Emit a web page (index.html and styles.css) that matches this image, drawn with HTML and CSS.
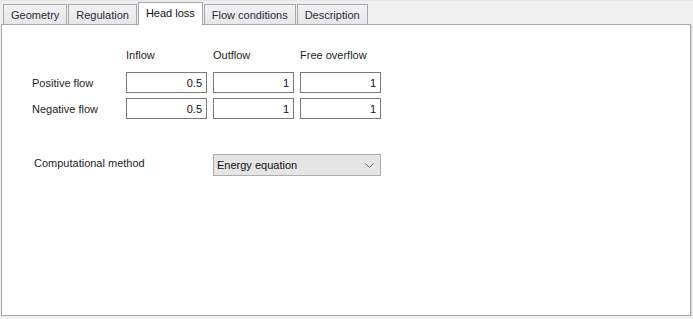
FILE: index.html
```html
<!DOCTYPE html>
<html>
  <head>
    <title>Head loss</title>
    <meta charset="UTF-8">
    <link rel="stylesheet" href="styles.css">
  </head>
  <body>
    <div class="tabs">
      <div class="tab">Geometry</div>
      <div class="tab">Regulation</div>
      <div class="tab active">Head loss</div>
      <div class="tab">Flow conditions</div>
      <div class="tab">Description</div>
    </div>

    <div class="panel">
      <div class="coeffs">
        <span></span>
        <span class="head">Inflow</span>
        <span class="head">Outflow</span>
        <span class="head">Free overflow</span>

        <span class="label">Positive flow</span>
        <input type="text" class="num" value="0.5">
        <input type="text" class="num" value="1">
        <input type="text" class="num" value="1">

        <span class="label">Negative flow</span>
        <input type="text" class="num" value="0.5">
        <input type="text" class="num" value="1">
        <input type="text" class="num" value="1">
      </div>

      <div class="method">
        <span class="label">Computational method</span>
        <div class="combo">
          <span>Energy equation</span>
          <svg width="9" height="5" viewBox="0 0 9 5"><path d="M0.5 0.5 L4.5 4.5 L8.5 0.5" fill="none" stroke="#6a6a6a" stroke-width="1"/></svg>
        </div>
      </div>
    </div>
  </body>
</html>
```

FILE: styles.css
```css
body {
  margin: 0;
  background-color: #f0f0f0;
  font-family: "Liberation Sans", Arial, sans-serif;
  font-size: 11px;
  color: #1e1e1e;
}

.tabs {
  display: flex;
  align-items: flex-end;
  height: 24px;
  padding-left: 3px;
  border-top: 1px solid #e6e6e6;
  box-sizing: border-box;
}

.tab {
  height: 20px;
  line-height: 20px;
  padding: 0 7px;
  margin-right: 1px;
  border: 1px solid #a7a7b0;
  border-bottom: none;
  box-sizing: border-box;
  background: linear-gradient(#f3f3f3, #e7e7e7);
  color: #2a2a40;
}

.tab.active {
  height: 23px;
  line-height: 21px;
  margin-bottom: -1px;
  background: #fff;
  position: relative;
  z-index: 1;
  color: #111;
}

.panel {
  height: 292px;
  margin: 0 2px 0 1px;
  border: 1px solid #a7a7b0;
  box-shadow: 1px 1px 0 #d6d6d6;
  background: #fff;
  box-sizing: border-box;
  padding: 18px 0 0 30px;
}

.coeffs {
  display: grid;
  grid-template-columns: 88px 81px 81px 81px;
  grid-template-rows: 24px 21px 21px;
  column-gap: 6px;
  row-gap: 5px;
  align-items: center;
}

.num {
  width: 81px;
  height: 21px;
  margin: 0;
  padding: 0 4px;
  border: 1px solid #7a7a7a;
  box-sizing: border-box;
  text-align: right;
  font-family: "Liberation Sans", Arial, sans-serif;
  font-size: 11px;
  color: #111;
}

.method {
  display: flex;
  align-items: flex-start;
  margin-top: 35px;
  padding-left: 2px;
}

.method .label {
  width: 179px;
  line-height: 18px;
}

.combo {
  width: 168px;
  height: 22px;
  display: flex;
  align-items: center;
  justify-content: space-between;
  padding: 0 6px 0 3px;
  border: 1px solid #adadad;
  background: #e5e5e5;
  box-sizing: border-box;
  color: #111;
}
```
